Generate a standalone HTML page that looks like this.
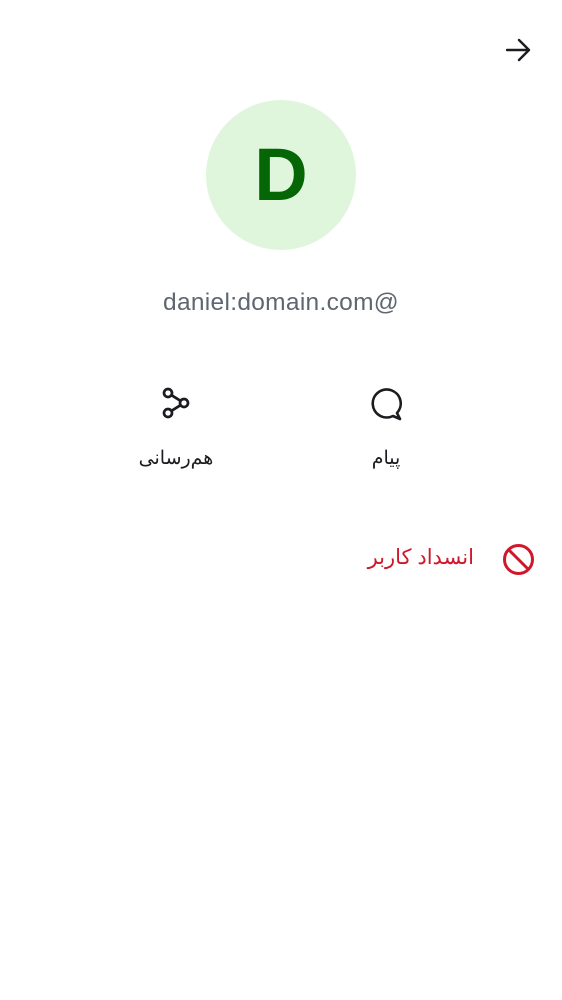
<!DOCTYPE html>
<html><head><meta charset="utf-8"><style>
html,body{margin:0;padding:0;background:#fff;width:562px;height:1000px;overflow:hidden;position:relative;font-family:"Liberation Sans","Noto Sans CJK SC",sans-serif}
.abs{position:absolute}
</style></head><body>
<svg class="abs" style="left:500px;top:34px" width="36" height="32" viewBox="0 0 36 32">
<path d="M7 16H29M19 6L29 16L19 26" fill="none" stroke="#1c1b1f" stroke-width="2.4" stroke-linecap="round" stroke-linejoin="round"/>
</svg>
<div class="abs" style="left:206px;top:100px;width:150px;height:150px;border-radius:50%;background:#dff5dc"></div>
<div class="abs" style="left:206px;top:100px;width:150px;height:150px;line-height:150px;text-align:center;font-size:74px;font-weight:bold;color:#056605">D</div>
<div class="abs" style="left:0;width:562px;top:289px;text-align:center;font-size:24.5px;letter-spacing:0.3px;color:#5f6670;direction:ltr">daniel:domain.com@</div>
<svg class="abs" style="left:156px;top:381px" width="40" height="44" viewBox="0 0 40 44">
<g fill="none" stroke="#1c1b1f" stroke-width="2.7">
<circle cx="12" cy="12" r="4"/><circle cx="28" cy="22" r="4"/><circle cx="12" cy="32" r="4"/>
<path d="M15.5 14.2L24.5 19.8M24.5 24.2L15.5 29.8"/>
</g></svg>
<svg class="abs" style="left:366px;top:383px" width="40" height="40" viewBox="0 0 40 40">
<path d="M34 36L31 30A14 14 0 1 0 27 33Z" fill="none" stroke="#1c1b1f" stroke-width="2.6" stroke-linejoin="round"/>
</svg>
<div class="abs" style="left:100px;width:152px;top:447px;text-align:center;font-size:19px;color:#1c1b1f;direction:rtl">هم‌رسانی</div>
<div class="abs" style="left:310px;width:152px;top:447px;text-align:center;font-size:19px;color:#1c1b1f;direction:rtl">پیام</div>
<svg class="abs" style="left:502px;top:543px" width="33" height="33" viewBox="0 0 33 33">
<g fill="none" stroke="#d0182c" stroke-width="3"><circle cx="16.5" cy="16.5" r="14"/><path d="M7 7L26 26"/></g>
</svg>
<div class="abs" style="right:88px;top:545px;font-size:21px;color:#d0182c;direction:rtl;white-space:nowrap">انسداد کاربر</div>
</body></html>
